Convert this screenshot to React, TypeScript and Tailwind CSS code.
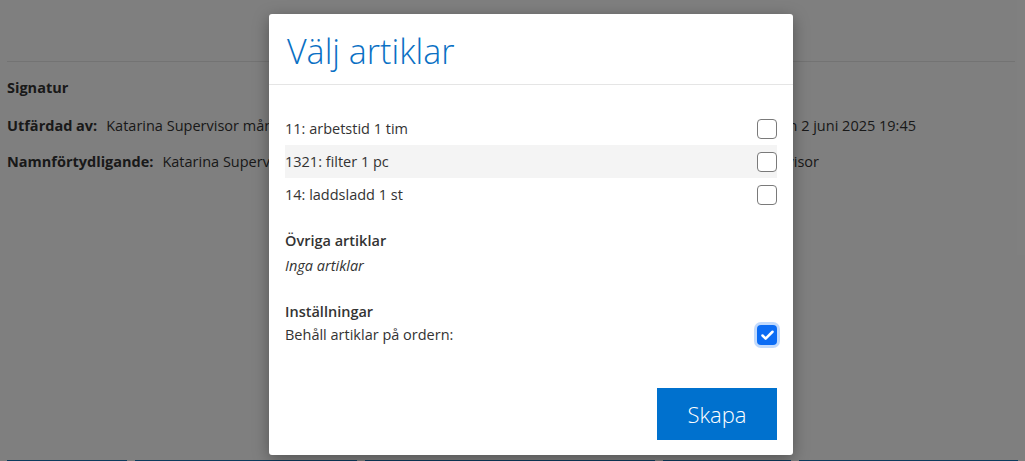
import { Check } from "lucide-react";

const articles = [
  { id: "11", label: "11: arbetstid 1 tim" },
  { id: "1321", label: "1321: filter 1 pc" },
  { id: "14", label: "14: laddsladd 1 st" },
];

const App = () => {
  return (
    <div className="relative w-[1025px] h-[461px] overflow-hidden bg-white text-[#333] font-['Open_Sans',sans-serif] text-[14.5px]">
      {/* page behind the dialog */}
      <div className="px-[7px] pt-[61px]">
        <div className="border-t border-[#e6e6e6] w-[1008px]" />
        <p className="mt-[15px] font-bold">Signatur</p>
        <div className="mt-[16px] flex w-[909px]">
          <span className="font-bold">Utfärdad av:</span>
          <span className="ml-[9px]">Katarina Supervisor måndagen</span>
          <span className="ml-auto">den 2 juni 2025 19:45</span>
        </div>
        <div className="mt-[14px] flex w-[812px]">
          <span className="font-bold">Namnförtydligande:</span>
          <span className="ml-[9px]">Katarina Supervisor</span>
          <span className="ml-auto">Katarina Supervisor</span>
        </div>
      </div>
      <div className="absolute left-0 right-0 top-[460px] flex gap-[8px] px-[7px]">
        <div className="h-[40px] w-[120px] bg-[#1a76bc]" />
        <div className="h-[40px] w-[222px] bg-[#1a76bc]" />
        <div className="h-[40px] w-[290px] bg-[#1a76bc]" />
        <div className="h-[40px] w-[128px] bg-[#1a76bc]" />
        <div className="h-[40px] flex-1 bg-[#1a76bc]" />
      </div>

      {/* overlay */}
      <div className="absolute inset-0 bg-black/50" />

      {/* dialog */}
      <div className="absolute left-[269px] top-[14px] w-[524px] h-[441px] bg-white rounded-[3px] shadow-[0_4px_16px_rgba(0,0,0,0.35)] flex flex-col">
        <div className="h-[71px] border-b border-[#e5e5e5] px-[18px] flex items-center">
          <h1 className="mt-[3px] text-[34px] font-light text-[#0a70c4] leading-none">Välj artiklar</h1>
        </div>
        <div className="flex-1 px-[16px] pt-[27px] flex flex-col">
          {articles.map((a, i) => (
            <div
              key={a.id}
              className={`h-[33px] flex items-center justify-between ${i === 1 ? "bg-[#f4f4f4]" : ""}`}
            >
              <span>{a.label}</span>
              <span className="w-[20px] h-[20px] rounded-[4px] border border-[#7a7a7a] bg-white" />
            </div>
          ))}

          <p className="mt-[19px] font-semibold">Övriga artiklar</p>
          <p className="mt-[3px] italic">Inga artiklar</p>

          <p className="mt-[24px] font-semibold">Inställningar</p>
          <div className="mt-[2px] flex items-center justify-between">
            <span>Behåll artiklar på ordern:</span>
            <span className="w-[20px] h-[20px] rounded-[4px] bg-[#0b6cf4] flex items-center justify-center shadow-[0_0_0_3px_rgba(11,108,244,0.25)]">
              <Check className="w-[15px] h-[15px] text-white" strokeWidth={4} />
            </span>
          </div>

          <div className="mt-auto mb-[15px] flex justify-end">
            <button className="w-[120px] h-[52px] bg-[#0071ce] text-white text-[22px] font-light">
              Skapa
            </button>
          </div>
        </div>
      </div>
    </div>
  );
};

export default App;
